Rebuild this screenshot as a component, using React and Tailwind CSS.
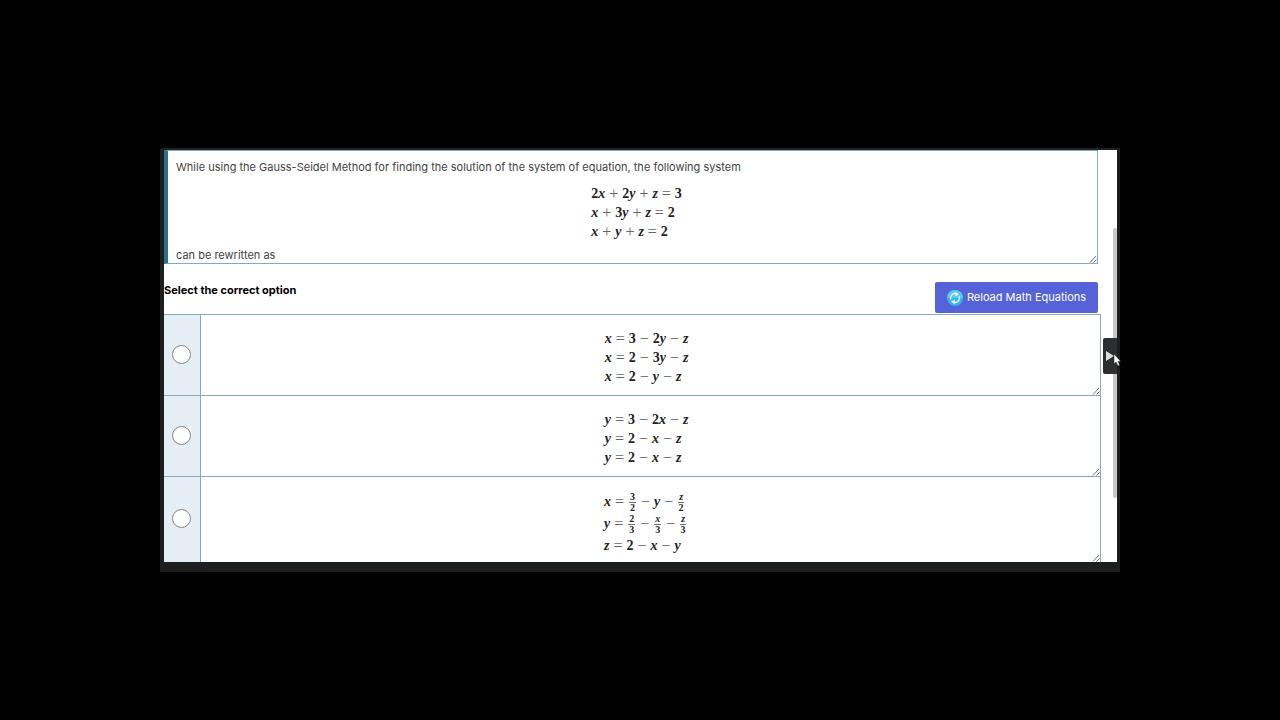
const questionSystem = ['2x + 2y + z = 3', 'x + 3y + z = 2', 'x + y + z = 2'];

const options = [
  { id: 'a', lines: ['x = 3 − 2y − z', 'x = 2 − 3y − z', 'x = 2 − y − z'] },
  { id: 'b', lines: ['y = 3 − 2x − z', 'y = 2 − x − z', 'y = 2 − x − z'] },
  { id: 'c', fractions: true, lines: ['x = 3/2 − y − z/2', 'y = 2/3 − x/3 − z/3', 'z = 2 − x − y'] },
];

const isLetter = (char) => /[a-z]/.test(char);

// Digits stay upright, variables are italic.
const Term = ({ text }) => (
  <span>
    {text.split('').map((char, i) => (
      <span key={i} className={isLetter(char) ? 'italic' : ''}>{char}</span>
    ))}
  </span>
);

const Fraction = ({ text }) => {
  const [top, bottom] = text.split('/');
  return (
    <span className="mx-px inline-flex flex-col items-center text-[10px] leading-[10px]">
      <span className="border-b border-gray-500 px-px">
        <Term text={top} />
      </span>
      <span><Term text={bottom} /></span>
    </span>
  );
};

const Equations = ({ lines, fractions }) => (
  <span className="inline-flex flex-col font-['Liberation_Serif',serif] text-sm font-bold text-[#222]">
    {lines.map((line, i) => (
      <span
        key={i}
        className={`flex items-center gap-1 ${fractions ? 'h-[22px]' : 'h-[19px]'}`}
      >
        {line.split(' ').map((token, j) => {
          if (['+', '−', '='].includes(token)) {
            return <span key={j} className="w-[9px] text-center text-base font-normal text-[#666]">{token}</span>;
          }
          return token.includes('/') ? <Fraction key={j} text={token} /> : <Term key={j} text={token} />;
        })}
      </span>
    ))}
  </span>
);

const ResizeGrip = () => (
  <svg className="absolute bottom-0 right-0 h-2 w-2" viewBox="0 0 8 8" fill="none" stroke="#6b7280" aria-hidden="true">
    <path d="M1 7.5L7 1M4.500 7.500L7.500 4.500" />
  </svg>
);

const ReloadIcon = () => (
  <svg className="h-4 w-4" viewBox="0 0 16 16" fill="none" aria-hidden="true">
    <circle cx="8" cy="8" r="8" fill="#35b6ec" />
    <path d="M0 8a8 8 0 0 1 16 0z" fill="#5cc8f0" />
    <path d="M3.800 9.500A4.400 4.400 0 0 1 9 3.700M12.200 6.500A4.400 4.400 0 0 1 7 12.300" stroke="#e6f8ff" strokeWidth="1.500" />
    <path d="M8.300 1.600L12 4.500L8.300 6.300zM7.700 14.400L4 11.500L7.700 9.700z" fill="#e6f8ff" />
  </svg>
);

const Option = ({ id, lines, fractions }) => (
  <label className="flex border-t border-[#85acb8]">
    <span className="flex w-[37px] shrink-0 items-center justify-center border-r border-[#85acb8] bg-[#e5edf5] pb-0.5 pr-0.5">
      <input
        type="radio"
        name="answer"
        value={id}
        className="h-[19px] w-[19px] appearance-none rounded-full border border-[#858585] bg-white checked:border-[5px]"
      />
    </span>
    <span
      className={`relative flex grow justify-center border-r border-[#85acb8] pt-[14px] ${fractions ? 'pb-[5px] pr-2.5' : 'pb-[9px] pr-2'}`}
    >
      <Equations lines={lines} fractions={fractions} />
      <ResizeGrip />
    </span>
  </label>
);

const App = () => {
  return (
    <div className="flex min-h-screen items-center justify-center bg-black font-['Inter',sans-serif] text-[11px] text-[#444]">
      <main className="relative w-3/4 border-b-[10px] border-l-4 border-r-[3px] border-t-2 border-[#1d1f1f] bg-white">
        <div className="mr-4">
          <section className="relative mr-[3px] border-b border-l-4 border-r border-t border-[#85acb8] border-l-[#2b6f88] pl-2 pt-[7px]">
            <p className="leading-[18px]">
              While using the Gauss-Seidel Method for finding the solution of the system of equation, the following system
            </p>
            <div className="mt-2 flex justify-center">
              <Equations lines={questionSystem} />
            </div>
            <p className="mt-1.5 leading-4">can be rewritten as</p>
            <ResizeGrip />
          </section>

          <div className="mr-[3px] flex items-start justify-between pb-px pt-[18px]">
            <h2 className="font-bold leading-4 text-black">Select the correct option</h2>
            <button
              type="button"
              className="flex h-[31px] w-[163px] items-center justify-center gap-1 whitespace-nowrap rounded-xs bg-[#5562d8] text-white"
            >
              <ReloadIcon />
              Reload Math Equations
            </button>
          </div>

          <div>
            {options.map((option) => (
              <Option key={option.id} {...option} />
            ))}
          </div>
        </div>

        {/* scrollbar thumb, drawer handle and pointer */}
        <div className="absolute right-0 top-[78px] h-[270px] w-1 rounded-full bg-[#c8c8c8]" />
        <button
          type="button"
          aria-label="Open panel"
          className="absolute right-0 top-[188px] flex h-9 w-3.5 items-center justify-center rounded-l-xs bg-[#2d2e2f]"
        >
          <svg className="h-2.5 w-2" viewBox="0 0 8 10" fill="#ddd" aria-hidden="true">
            <path d="M0 0L8 5L0 10z" />
          </svg>
        </button>
        <svg className="absolute -right-1 top-[203px] h-3.5 w-2" viewBox="0 0 8 14" fill="#fff" stroke="#222" strokeWidth="0.500" aria-hidden="true">
          <path d="M1 1V11L3 9L5 13L6.500 12L5 8.500H7.800z" />
        </svg>
      </main>
    </div>
  );
};

export default App;
